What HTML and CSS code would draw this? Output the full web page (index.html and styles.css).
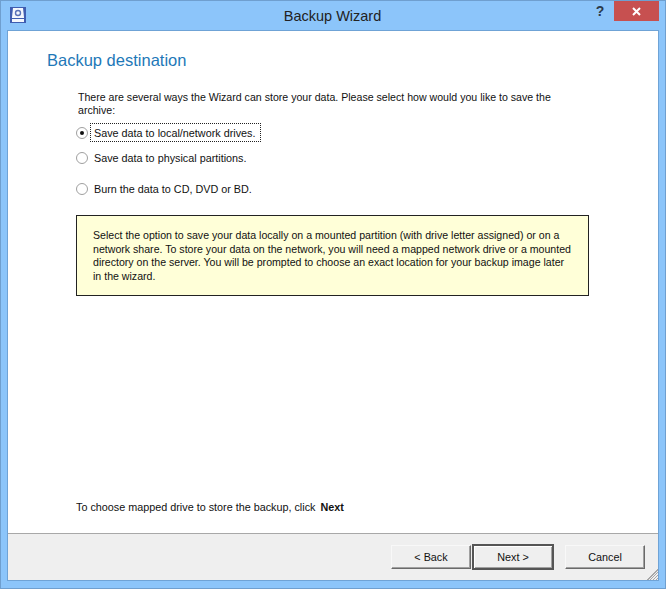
FILE: index.html
```html
<!DOCTYPE html>
<html lang="en">
<head>
<meta charset="utf-8">
<title>Backup Wizard</title>
<link rel="stylesheet" href="styles.css">
</head>
<body>
<div class="window">
  <header class="titlebar">
    <svg class="app-icon" width="16" height="16" viewBox="0 0 16 16" aria-hidden="true">
      <rect width="16" height="16" fill="#3f5db0"/>
      <path d="M3 1h10l1 9v5H2v-5z" fill="#f4f7fc"/>
      <circle cx="8" cy="6" r="2.500" fill="none" stroke="#5a72b8" stroke-width="1.400"/>
      <path d="M2 11.500h12" stroke="#3f5db0"/>
    </svg>
    <div class="title">Backup Wizard</div>
    <div class="help">?</div>
    <div class="close">
      <svg width="9" height="9" viewBox="0 0 9 9" aria-hidden="true"><path d="M1 1l7 7M8 1l-7 7" stroke="#fff" stroke-width="2"/></svg>
    </div>
  </header>
  <div class="client">
    <main class="content">
      <h1 class="heading">Backup destination</h1>
      <p class="intro">There are several ways the Wizard can store your data. Please select how would you like to save the archive:</p>
      <div class="options">
        <div class="option first"><span class="radio checked"></span><span class="label focused">Save data to local/network drives.</span></div>
        <div class="option second"><span class="radio"></span><span class="label">Save data to physical partitions.</span></div>
        <div class="option third"><span class="radio"></span><span class="label">Burn the data to CD, DVD or BD.</span></div>
      </div>
      <div class="note">Select the option to save your data locally on a mounted partition (with drive letter assigned) or on a network share. To store your data on the network, you will need a mapped network drive or a mounted directory on the server. You will be prompted to choose an exact location for your backup image later in the wizard.</div>
      <p class="hint">To choose mapped drive to store the backup, click <b>Next</b></p>
    </main>
    <footer class="footer">
      <button class="btn back">&lt; Back</button>
      <button class="btn next">Next &gt;</button>
      <button class="btn cancel">Cancel</button>
      <div class="grip"></div>
    </footer>
  </div>
</div>
</body>
</html>
```
FILE: styles.css
```css
* { box-sizing: border-box; }
html, body { margin: 0; padding: 0; }
body { width: 666px; height: 589px; overflow: hidden; font-family: "Liberation Sans", Arial, sans-serif; font-size: 10.800px; color: #111; }
.window { width: 666px; height: 589px; background: #8cc5fa; border: 1px solid #6f9fcf; padding: 0 6px 7px 6px; display: flex; flex-direction: column; }
.titlebar { height: 29px; flex: none; display: flex; align-items: flex-start; }
.app-icon { margin: 6px 0 0 3px; flex: none; }
.title { flex: 1; text-align: center; font-size: 14.500px; line-height: 30px; color: #222; padding-left: 47px; }
.help { width: 16px; margin: 2px 6px 0 0; font-weight: bold; font-size: 14px; line-height: 16px; text-align: center; color: #2b3a4a; }
.close { width: 45px; height: 20px; background: #c75050; display: flex; align-items: center; justify-content: center; }
.client { flex: 1; background: #fff; border: 1px solid #6fa3d6; display: flex; flex-direction: column; min-height: 0; }
.content { flex: 1; padding: 19px 0 0 39px; display: flex; flex-direction: column; min-height: 0; }
.heading { margin: 0; font-weight: normal; font-size: 16.500px; line-height: 20px; color: #1e78b8; }
.intro { margin: 21px 0 0 31px; line-height: 13px; width: 500px; font-size: 10.600px; }
.options { margin: 6px 0 0 29px; }
.option { display: flex; align-items: center; height: 19px; }
.second { margin-top: 6px; }
.third { margin-top: 12px; }
.radio { width: 12px; height: 12px; border-radius: 50%; border: 1px solid #a0a0a0; background: #fff; flex: none; margin-right: 2px; position: relative; }
.radio.checked::after { content: ""; position: absolute; left: 3px; top: 3px; width: 4px; height: 4px; border-radius: 50%; background: #111; }
.label { padding: 3px 3px 1px; border: 1px dotted transparent; line-height: 13px; }
.label.focused { border-color: #222; padding-right: 5px; }
.note { margin: 17px 0 0 29px; width: 513px; height: 81px; background: #ffffd8; border: 1px solid #222; padding: 13px 15px 0 16px; line-height: 13.600px; font-size: 10.600px; }
.hint { margin: auto 0 19px 29px; line-height: 14px; }
.hint b { margin-left: 2px; }
.footer { height: 47px; flex: none; background: #efefef; border-top: 1px solid #a8a8a8; display: flex; align-items: flex-start; position: relative; padding: 11px 0 0 383px; }
.btn { width: 80px; height: 24px; font: 10.800px "Liberation Sans", Arial, sans-serif; color: #111; background: #efefef; border: 1px solid; border-color: #f8f8f8 #6a6a6a #6a6a6a #f8f8f8; padding: 0; margin: 0; box-shadow: inset -1px -1px 0 #a0a0a0; }
.next { width: 82px; margin-left: 1px; border: 2px solid #555; box-shadow: inset 1px 1px 0 #fff, inset -1px -1px 0 #a0a0a0; margin-top: -1px; height: 26px; }
.cancel { margin-left: 11px; }
.grip { position: absolute; right: 0; bottom: 0; width: 12px; height: 12px; background: repeating-linear-gradient(135deg, #efefef 0 1px, #a8a8a8 1px 2px); clip-path: polygon(100% 0, 100% 100%, 0 100%); }
```
